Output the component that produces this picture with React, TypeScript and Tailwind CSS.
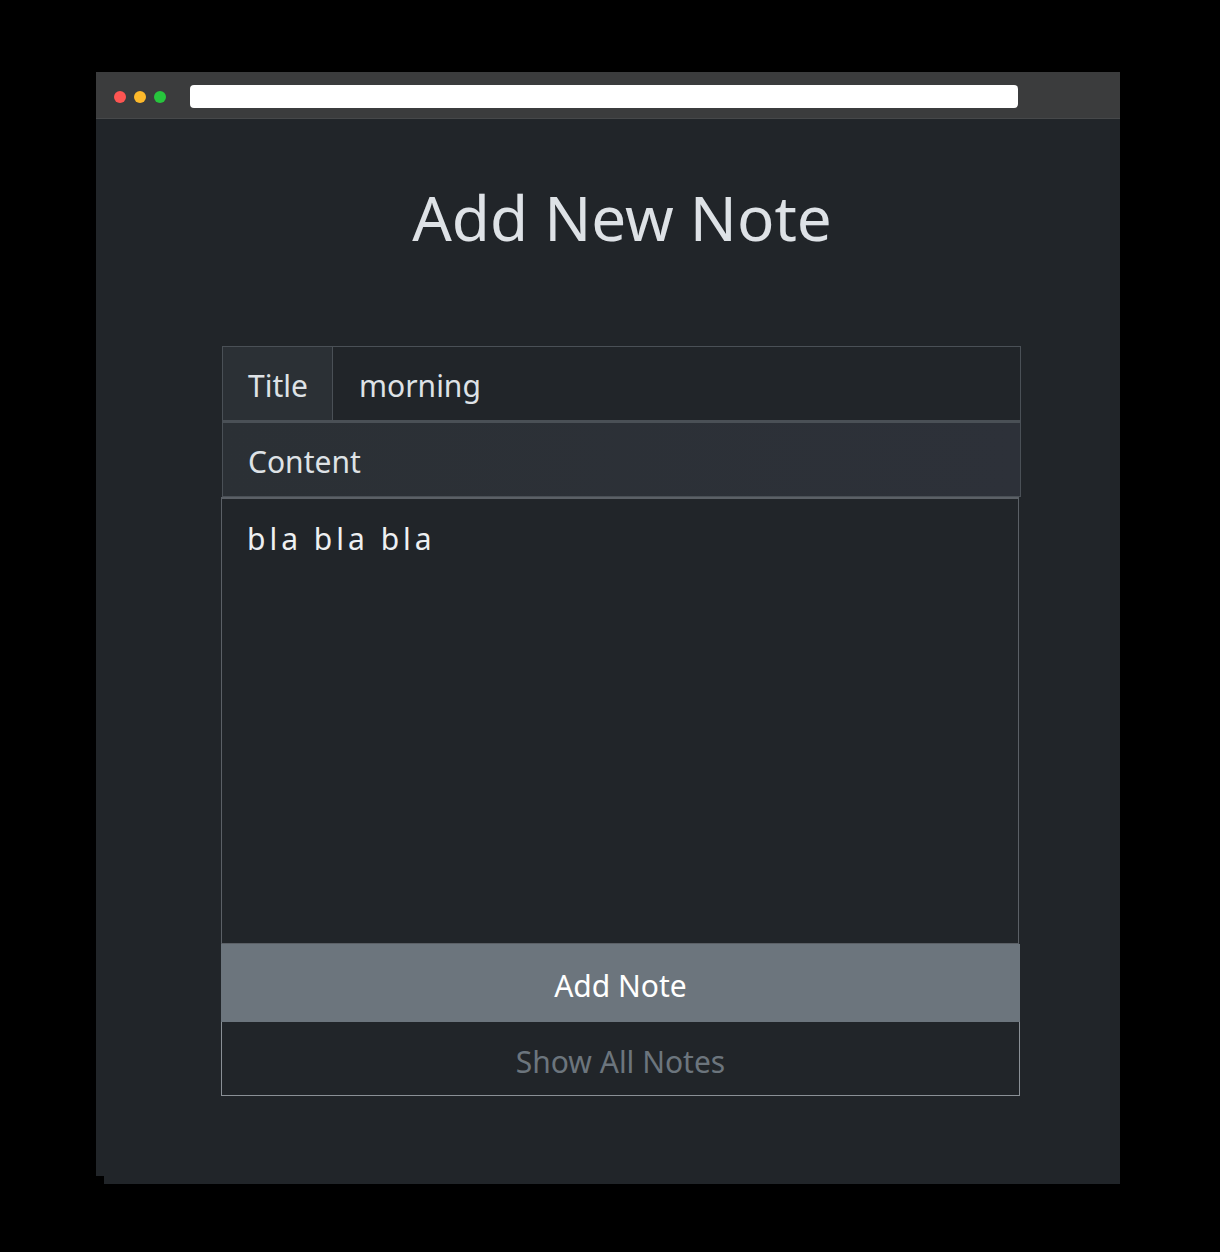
import React from 'react';

const font = { fontFamily: '"Noto Sans", "Open Sans", sans-serif' };

export default function App() {
  return (
    <div className="min-h-[1252px] bg-black pt-[72px] pl-[96px]" style={font}>
      <div className="w-[1024px]">
        {/* browser chrome */}
        <div className="flex h-[47px] items-center bg-[#3b3c3d] border-b border-[#46484a] pl-[18px] pt-[3px]">
          <div className="flex gap-[8px]">
            <span className="h-[12px] w-[12px] rounded-full bg-[#fe5552]" />
            <span className="h-[12px] w-[12px] rounded-full bg-[#fdb92b]" />
            <span className="h-[12px] w-[12px] rounded-full bg-[#27c53d]" />
          </div>
          <div className="ml-[24px] h-[23px] w-[828px] rounded-[4px] bg-white" />
        </div>

        <div className="h-[1057px] bg-[#212529]">
          <h1 className="pt-[60px] text-center text-[62px] leading-[76px] text-[#dee2e6] pl-[28px]">Add New Note</h1>

          <div className="ml-[126px] mt-[91px] w-[799px]">
            <div className="flex h-[75px] border border-[#4a5056] bg-[#212529]">
              <div className="flex w-[110px] items-center border-r border-[#4a5056] bg-[#2b3035] pl-[25px] pt-[4px] text-[30px] text-[#dee2e6]">
                Title
              </div>
              <div className="flex flex-1 items-center pl-[26px] pt-[4px] text-[30px] text-[#dee2e6]">morning</div>
            </div>
            <div className="flex h-[76px] items-center border border-t-[2px] border-[#4a5056] bg-gradient-to-r from-[#2b3035] to-[#2d3139] pl-[25px] pt-[3px] text-[30px] text-[#dee2e6]">
              Content
            </div>
            <div className="-ml-[1px] w-[798px] h-[447px] border border-t-[2px] border-[#5b6066] pl-[25px] pt-[17px] text-[30px] tracking-[4px] text-[#eef0f2]">
              bla bla bla
            </div>
            <div className="-ml-[1px] flex w-[799px] h-[78px] items-center justify-center bg-[#6c757d] pt-[4px] text-[30px] text-white">
              Add Note
            </div>
            <div className="-ml-[1px] flex w-[799px] h-[74px] items-center justify-center border border-t-0 border-[#8a9096] pt-[5px] text-[30px] text-[#6c757d]">
              Show All Notes
            </div>
          </div>
        </div>
        <div className="ml-[8px] h-[8px] bg-[#212529]" />
      </div>
    </div>
  );
}
